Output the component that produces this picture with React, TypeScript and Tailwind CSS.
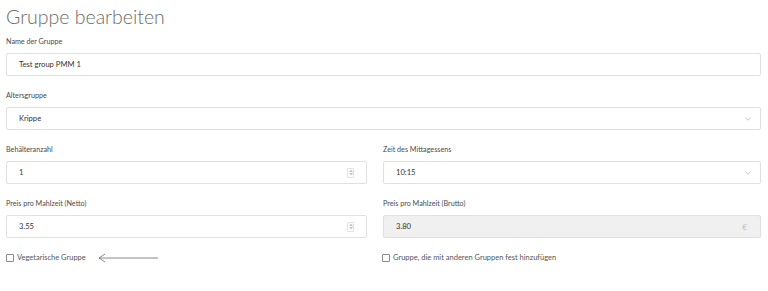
import React from 'react';

const font = { fontFamily: 'Lato, "Open Sans", sans-serif' };

const Label: React.FC<{ children: React.ReactNode }> = ({ children }) => (
  <div className="h-[10px] leading-[10px] text-[7.2px] text-[#4a4a4a] mb-[6px]">{children}</div>
);

const Chevron = () => (
  <svg width="6" height="4" viewBox="0 0 6 4" className="text-[#b5b5b5] mr-[2px]">
    <path d="M0.5 0.8 L3 3.2 L5.5 0.8" fill="none" stroke="currentColor" strokeWidth="0.8" />
  </svg>
);

const Spinner = () => (
  <div className="flex flex-col items-center justify-center w-[7px] h-[10px] mr-[5px] border border-[#e2e2e2] rounded-[1px] gap-[1px]">
    <svg width="4" height="3" viewBox="0 0 4 3"><path d="M0 3 L2 0.5 L4 3 Z" fill="#c4c4c4" /></svg>
    <svg width="4" height="3" viewBox="0 0 4 3"><path d="M0 0 L2 2.5 L4 0 Z" fill="#c4c4c4" /></svg>
  </div>
);

const Box: React.FC<{ value: string; right?: React.ReactNode; disabled?: boolean }> = ({ value, right, disabled }) => (
  <div
    className={`h-[23px] flex items-center justify-between pl-[12px] pr-[7px] border border-[#e0e0e0] rounded-[2px] text-[7.6px] text-[#333] ${
      disabled ? 'bg-[#f0f0f0]' : 'bg-white'
    }`}
  >
    <span>{value}</span>
    {right}
  </div>
);

const Check: React.FC<{ label: string }> = ({ label }) => (
  <div className="flex items-center gap-[3px] h-[10px]">
    <span className="w-[8px] h-[8px] border border-[#8a8a8a] rounded-[1px] bg-white" />
    <span className="text-[7.5px] text-[#555]">{label}</span>
  </div>
);

export default function App() {
  return (
    <div className="w-[768px] h-[291px] bg-white overflow-hidden px-[6px] pr-[7px]" style={font}>
      <h1 className="pt-[5px] mb-[8px] text-[19.5px] leading-[24px] font-light text-[#6b6b6b]">Gruppe bearbeiten</h1>

      <Label>Name der Gruppe</Label>
      <Box value="Test group PMM 1" />

      <div className="mt-[15px]">
        <Label>Altersgruppe</Label>
        <Box value="Krippe" right={<Chevron />} />
      </div>

      <div className="grid grid-cols-[361px_1fr] gap-x-[16px]">
        <div className="mt-[15px]">
          <Label>Behälteranzahl</Label>
          <Box value="1" right={<Spinner />} />
        </div>
        <div className="mt-[15px]">
          <Label>Zeit des Mittagessens</Label>
          <Box value="10:15" right={<Chevron />} />
        </div>
        <div className="mt-[15px]">
          <Label>Preis pro Mahlzeit (Netto)</Label>
          <Box value="3.55" right={<Spinner />} />
        </div>
        <div className="mt-[15px]">
          <Label>Preis pro Mahlzeit (Brutto)</Label>
          <Box value="3.80" disabled right={<span className="text-[8px] text-[#c0c0c0] pr-[6px]">€</span>} />
        </div>
        <div className="mt-[15px] flex items-center">
          <Check label="Vegetarische Gruppe" />
          <svg width="62" height="10" viewBox="0 0 62 10" className="ml-[12px]">
            <path d="M1 5 H60 M1 5 L7 1 M1 5 L7 9" fill="none" stroke="#6a6a6a" strokeWidth="0.8" />
          </svg>
        </div>
        <div className="mt-[15px] -ml-[1px]">
          <Check label="Gruppe, die mit anderen Gruppen fest hinzufügen" />
        </div>
      </div>
    </div>
  );
}
